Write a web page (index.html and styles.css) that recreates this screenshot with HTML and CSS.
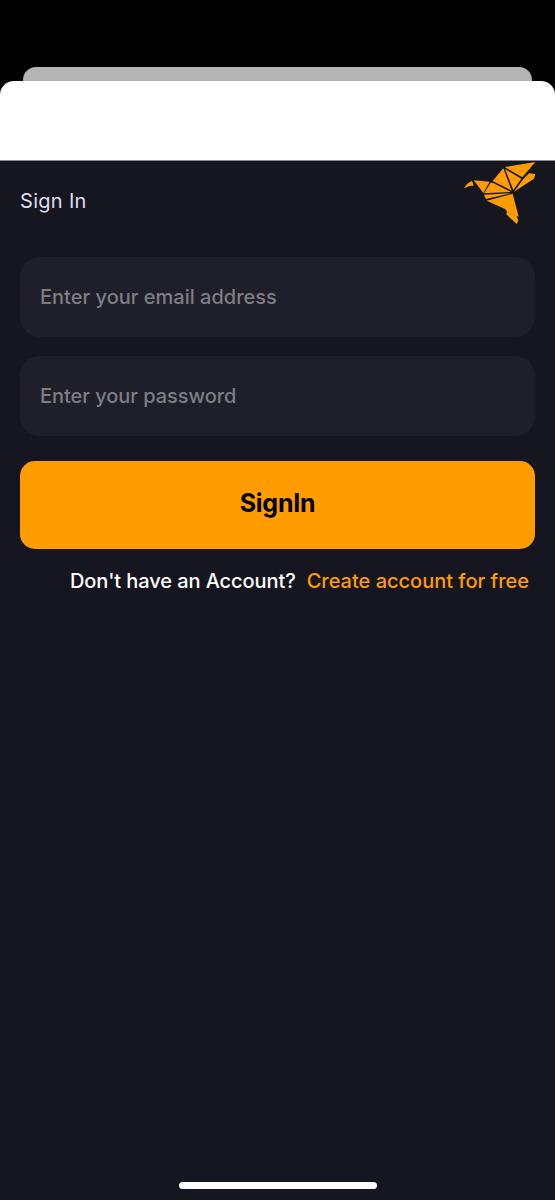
FILE: index.html
```html
<!DOCTYPE html>
<html lang="en">
<head>
<meta charset="utf-8">
<title>Sign In</title>
<link rel="stylesheet" href="styles.css">
</head>
<body>
<div class="backdrop-card"></div>
<main class="sheet">
  <section class="screen">
    <header class="header">
      <h1 class="title">Sign In</h1>
      <svg class="logo" viewBox="9 9 216 192" aria-hidden="true">
        <path d="M9 91 18 78 33 68 38 83 25 84Z"/>
        <path d="M38 67 86 71 67 105Z"/>
        <path d="M95 74 150 102 69 106 89 74Z"/>
        <path d="M127 31 152 98 95 69Z"/>
        <path d="M132 33 181 62 157 96Z"/>
        <path d="M131 27 223 12 184 58Z"/>
        <path d="M187 63 204 46 223 48 219 62 159 101Z"/>
        <path d="M69 110 148 106 75 123Z"/>
        <path d="M77 128 155 107 173 176 167 173 172 189 167 198 136 169 138 160 132 153Z"/>
      </svg>
    </header>
    <form class="form">
      <input class="field" type="email" placeholder="Enter your email address" aria-label="Email address">
      <input class="field password" type="password" placeholder="Enter your password" aria-label="Password">
      <button class="submit" type="button"><span>SignIn</span></button>
    </form>
    <p class="signup"><span class="question">Don't have an Account?</span><a class="create" href="#">Create account for free</a></p>
    <div class="home-indicator"></div>
  </section>
</main>
</body>
</html>
```
FILE: styles.css
```css
* { box-sizing: border-box; }
body {
  display: flex;
  flex-direction: column;
  height: 1200px;
  margin: 0;
  padding-top: 67px;
  overflow: hidden;
  background: #000;
  font-family: Inter, "Liberation Sans", sans-serif;
}
.backdrop-card {
  flex: none;
  height: 14px;
  margin: 0 23px;
  border-radius: 13px 13px 0 0;
  background: #b4b4b4;
}
.sheet {
  display: flex;
  flex: 1;
  padding-top: 79.5px;
  border-radius: 14px 14px 0 0;
  background: linear-gradient(#fff 79px, #8b8b90 79px, #8b8b90 80px, #161621 80px);
}
.screen {
  display: flex;
  flex: 1;
  flex-direction: column;
  padding: 0 20px;
}
.header {
  display: flex;
  justify-content: space-between;
  height: 96px;
}
.title {
  margin: 27px 0 0;
  color: #dedeee;
  font-size: 20px;
  font-weight: 400;
  line-height: 26px;
  letter-spacing: 0.3px;
}
.logo {
  width: 72px;
  height: 64px;
  margin: 0.5px -1px 0 0;
  fill: #ff9c00;
}
.form {
  display: flex;
  flex-direction: column;
}
.field {
  height: 80px;
  margin: 0 0 19.5px;
  padding: 0 20px;
  border: 0;
  border-radius: 20px;
  background: #1f1e2b;
  color: #fff;
  font: 500 20px Inter, sans-serif;
}
.field::placeholder { color: #7e7e82; opacity: 1; }
.password {
  margin-bottom: 25px;
  letter-spacing: -0.05px;
}
.submit {
  height: 88px;
  padding: 0 0 4px;
  border: 0;
  border-radius: 15px;
  background: #ff9c00;
  color: #000;
  font: 700 25px Inter, sans-serif;
  letter-spacing: -0.25px;
}
.signup {
  display: flex;
  justify-content: flex-end;
  gap: 11px;
  margin: 19px 6px 0 0;
  font-size: 20px;
  font-weight: 500;
  line-height: 26px;
  white-space: nowrap;
}
.question { color: #fff; letter-spacing: -0.08px; }
.create { color: #ff9c00; text-decoration: none; }
.home-indicator {
  width: 198px;
  height: 7px;
  margin: auto auto 11px;
  border-radius: 4px;
  background: #fff;
}
```
